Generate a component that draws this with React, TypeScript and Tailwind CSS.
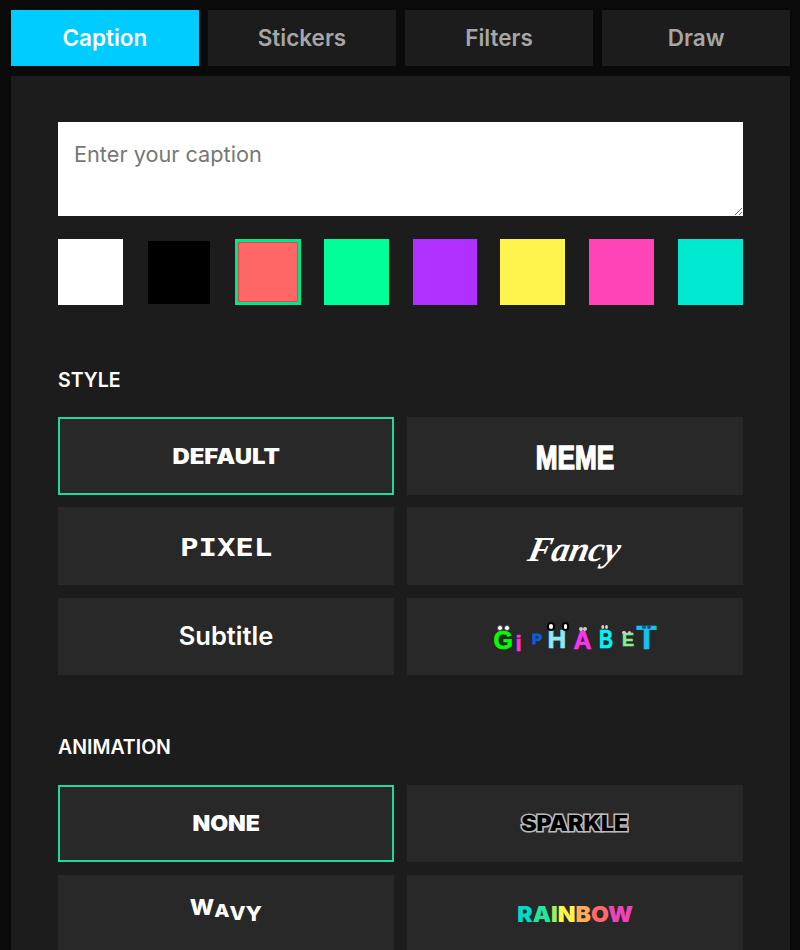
import type { ReactNode } from 'react';

const tabs = ['Caption', 'Stickers', 'Filters', 'Draw'];

function OptionButton({ active, children }: { active?: boolean; children: ReactNode }) {
  return (
    <button
      className={`h-[77.5px] flex items-center justify-center overflow-hidden bg-[#282828] text-white ${
        active ? 'border-2 border-[#1fd99a]' : ''
      }`}
    >
      {children}
    </button>
  );
}

// little eyes sitting on the letters of the Giphabet logo
function Eye({ className }: { className: string }) {
  return <span className={`absolute rounded-full ${className}`} />;
}

function Giphabet() {
  return (
    <span className="flex items-baseline translate-y-[1px] font-['Liberation_Sans',sans-serif] font-bold leading-none">
      <span className="relative w-[19px] text-[#00ff00] text-[25px] [-webkit-text-stroke:0.6px_#00ff00]">
        G
        <Eye className="-top-[3px] left-[3px] w-[6px] h-[6px] bg-white border border-[#555]" />
        <Eye className="-top-[3px] left-[10px] w-[6px] h-[6px] bg-white border border-[#555]" />
      </span>
      <span className="relative w-[6px] ml-[3px] text-[#ff33dd] text-[22px] translate-y-[2px] [-webkit-text-stroke:0.6px_#ff33dd]">i</span>
      <span className="relative w-[11px] ml-[10px] text-[#0d5fd6] text-[15px] -translate-y-[5px] [-webkit-text-stroke:1px_#0d5fd6]">P</span>
      <span className="relative w-[19px] ml-[5px] text-[#8ceaf5] text-[26px] -translate-y-[1px] [-webkit-text-stroke:0.6px_#8ceaf5]">
        H
        <Eye className="-top-[4px] -left-[1px] w-[8px] h-[9px] bg-white border-2 border-black" />
        <Eye className="-top-[4px] left-[14px] w-[7px] h-[9px] bg-white border-2 border-black" />
      </span>
      <span className="relative w-[18px] ml-[7px] text-[#ff33ee] text-[25px] [-webkit-text-stroke:0.6px_#ff33ee]">
        A
        <Eye className="-top-[1px] left-[5px] w-[4px] h-[4px] bg-[#ccc]" />
        <Eye className="-top-[1px] left-[9px] w-[4px] h-[4px] bg-[#ccc]" />
      </span>
      <span className="relative w-[14px] ml-[7px] text-[#00f5f5] text-[26px] -translate-y-[1px] origin-left scale-x-75 [-webkit-text-stroke:0.6px_#00f5f5]">
        B
        <Eye className="-top-[1px] left-[3px] w-[4px] h-[4px] bg-[#ccc]" />
        <Eye className="-top-[1px] left-[8px] w-[4px] h-[4px] bg-[#ccc]" />
      </span>
      <span className="relative w-[13px] ml-[9px] text-[#84ee90] text-[18px] -translate-y-[3px] [-webkit-text-stroke:0.6px_#84ee90]">
        E
        <Eye className="top-0 left-0 w-[4px] h-[3px] bg-[#ccc]" />
        <Eye className="top-0 left-[6px] w-[3px] h-[3px] bg-[#ccc]" />
      </span>
      <span className="relative w-[20px] ml-[2px] text-[#10c4f0] text-[33px] [-webkit-text-stroke:0.6px_#10c4f0]">
        T
        <Eye className="top-[4px] left-[5px] w-[4px] h-[4px] bg-[#1a4a8a]" />
        <Eye className="top-[4px] left-[10px] w-[4px] h-[4px] bg-[#1a4a8a]" />
      </span>
    </span>
  );
}

function Rainbow() {
  const letters: [string, string][] = [
    ['R', 'text-[#00dcc8]'],
    ['A', 'text-[#22e6a0]'],
    ['I', 'text-[#a0ee60]'],
    ['N', 'text-[#fff34d]'],
    ['B', 'text-[#ffaa5c]'],
    ['O', 'text-[#ff6a66]'],
    ['W', 'text-[#ee44b8]'],
  ];
  return (
    <span className="font-['Inter',sans-serif] font-black text-[22px] leading-none scale-x-105">
      {letters.map(([l, c]) => (
        <span key={l} className={c}>{l}</span>
      ))}
    </span>
  );
}

function Wavy() {
  return (
    <span className="flex items-start font-['Inter',sans-serif] font-extrabold leading-none text-white scale-x-110">
      <span className="text-[21px] -translate-y-[6px]">W</span>
      <span className="text-[18px] -translate-y-[1px]">A</span>
      <span className="text-[19px] translate-y-[1px]">V</span>
      <span className="text-[20px] translate-y-[1px]">Y</span>
    </span>
  );
}

export default function App() {
  const swatches = [
    'w-[65px] h-[66px] bg-white',
    'ml-[25px] w-[62px] h-[63px] bg-black',
    'ml-[25px] w-[66px] h-[66px] bg-[#ff6666] border-[3px] border-[#00e68a] outline outline-1 -outline-offset-4 outline-[#d94a4a]',
    'ml-[23px] w-[65px] h-[66px] bg-[#00ff99]',
    'ml-[24px] w-[64px] h-[66px] bg-[#b030ff]',
    'ml-[23px] w-[65px] h-[66px] bg-[#fff34d]',
    'ml-[24px] w-[65px] h-[66px] bg-[#ff44b8]',
    'ml-[24px] w-[65px] h-[66px] bg-[#00e8d0]',
  ];

  return (
    <div className="w-[800px] h-[950px] overflow-hidden bg-[#0a0a0a] px-[10px] pt-[10px] font-['Inter',sans-serif]">
      <div className="flex gap-[9.4px] pl-[1px]">
        {tabs.map((t, i) => (
          <button
            key={t}
            className={`flex-1 h-[56px] text-[22.5px] font-semibold ${
              i === 0 ? 'bg-[#00ccff] text-white' : 'bg-[#1c1c1c] text-[#a6a6a6]'
            }`}
          >
            {t}
          </button>
        ))}
      </div>

      <div className="mt-[10px] ml-[1px] bg-[#1c1c1c] px-[47px] pt-[46px] h-[900px]">
        <textarea
          placeholder="Enter your caption"
          className="block w-full h-[94px] bg-white px-4 py-[17px] text-[21.7px] leading-[30px] text-black placeholder:text-[#777] outline-none resize-y"
        />

        <div className="mt-[23px] flex items-center h-[66px]">
          {swatches.map((s) => (
            <div key={s} className={s} />
          ))}
        </div>

        <h2 className="mt-[63px] text-[19.5px] leading-[25px] font-semibold text-white">STYLE</h2>
        <div className="mt-[24px] grid grid-cols-2 gap-x-[13px] gap-y-[12.9px]">
          <OptionButton active>
            <span className="font-black text-[21px] scale-x-[1.14] translate-y-[1px]">DEFAULT</span>
          </OptionButton>
          <OptionButton>
            <span className="font-['Liberation_Sans',sans-serif] font-bold text-[34px] leading-none scale-x-[0.77] translate-y-[1px] [-webkit-text-stroke:1.5px_white]">MEME</span>
          </OptionButton>
          <OptionButton>
            <span className="font-['DejaVu_Sans_Mono',monospace] font-bold text-[24px] leading-none scale-x-[1.28] translate-y-[2px]">PIXEL</span>
          </OptionButton>
          <OptionButton>
            <span className="font-['Liberation_Serif',serif] italic font-bold text-[35px] leading-none -skew-x-12 translate-y-[3px]">Fancy</span>
          </OptionButton>
          <OptionButton>
            <span className="text-[25.5px] font-semibold">Subtitle</span>
          </OptionButton>
          <OptionButton>
            <Giphabet />
          </OptionButton>
        </div>

        <h2 className="mt-[59.5px] text-[19.5px] leading-[25px] font-semibold text-white">ANIMATION</h2>
        <div className="mt-[25px] grid grid-cols-2 gap-x-[13px] gap-y-[12.9px]">
          <OptionButton active>
            <span className="font-black text-[22px] scale-x-105">NONE</span>
          </OptionButton>
          <OptionButton>
            <span className="font-black text-[21px] text-black scale-x-110 [-webkit-text-stroke:3px_#bbbbbb] [paint-order:stroke_fill]">SPARKLE</span>
          </OptionButton>
          <OptionButton>
            <Wavy />
          </OptionButton>
          <OptionButton>
            <Rainbow />
          </OptionButton>
        </div>
      </div>
    </div>
  );
}
